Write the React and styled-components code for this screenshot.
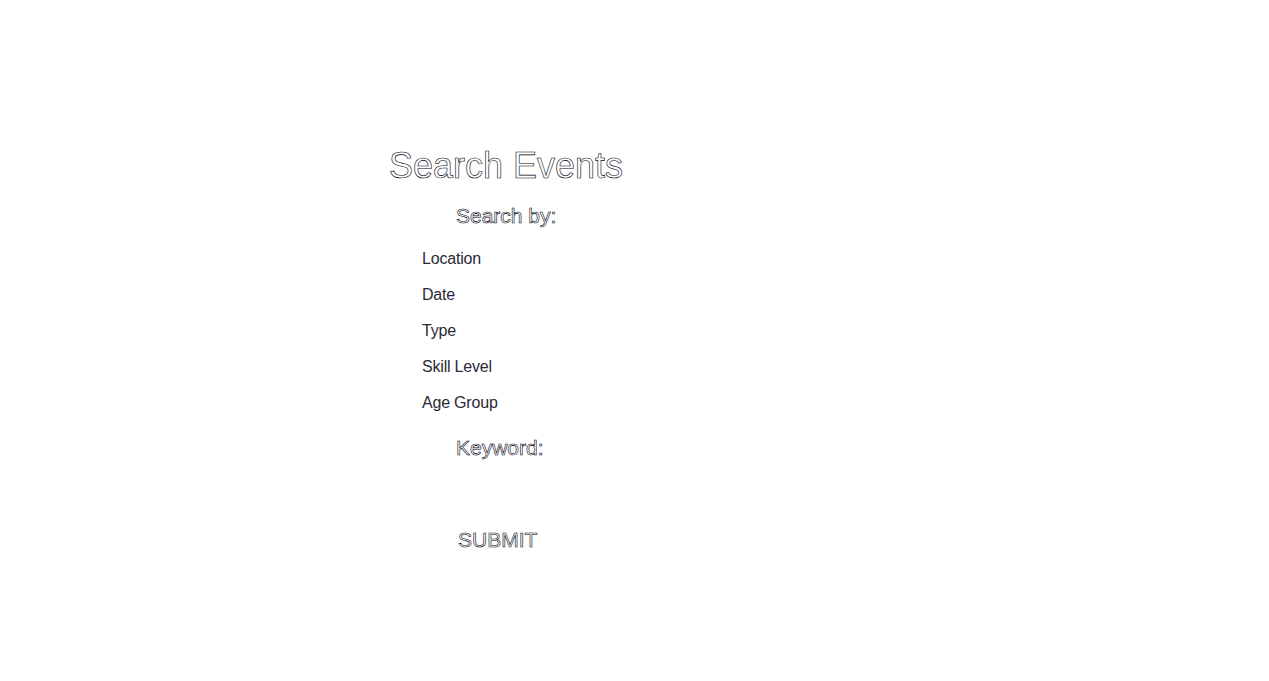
import React from "react";
import styled, { createGlobalStyle } from "styled-components";

const Global = createGlobalStyle`
  html, body { margin: 0; padding: 0; background: #fff; }
  body { font-family: "Liberation Sans", Arial, sans-serif; }
`;

const Page = styled.div`
  width: 1269px;
  min-height: 681px;
  display: flex;
  justify-content: center;
`;

const Panel = styled.section`
  width: 491px;
  padding-top: 145px;
  display: flex;
  flex-direction: column;
  align-items: flex-start;
`;

const outline = `
  color: #fff;
  -webkit-text-stroke: 0.6px #000010;
`;

const Title = styled.h1`
  margin: 0;
  font-size: 36px;
  font-weight: 400;
  line-height: 41px;
  ${outline}
`;

const Heading = styled.h3`
  margin: ${(p) => p.$top}px 0 0 67px;
  font-size: 21px;
  font-weight: 400;
  line-height: 24px;
  ${outline}
`;

const List = styled.ul`
  list-style: none;
  margin: 22px 0 0 33px;
  padding: 0;
  display: flex;
  flex-direction: column;
  gap: 18px;
`;

const Item = styled.li`
  font-size: 16px;
  line-height: 18px;
  letter-spacing: -0.2px;
  color: #2a2a36;
`;

const Submit = styled.button`
  margin: 68px 0 0 69px;
  padding: 0;
  border: 0;
  background: transparent;
  font-family: "Liberation Sans", Arial, sans-serif;
  font-size: 21px;
  line-height: 24px;
  ${outline}
`;

export default function App() {
  return (
    <Page>
      <Global />
      <Panel>
        <Title>Search Events</Title>
        <Heading $top={18}>Search by:</Heading>
        <List>
          {["Location", "Date", "Type", "Skill Level", "Age Group"].map((t) => (
            <Item key={t}>{t}</Item>
          ))}
        </List>
        <Heading $top={24}>Keyword:</Heading>
        <Submit>SUBMIT</Submit>
      </Panel>
    </Page>
  );
}
